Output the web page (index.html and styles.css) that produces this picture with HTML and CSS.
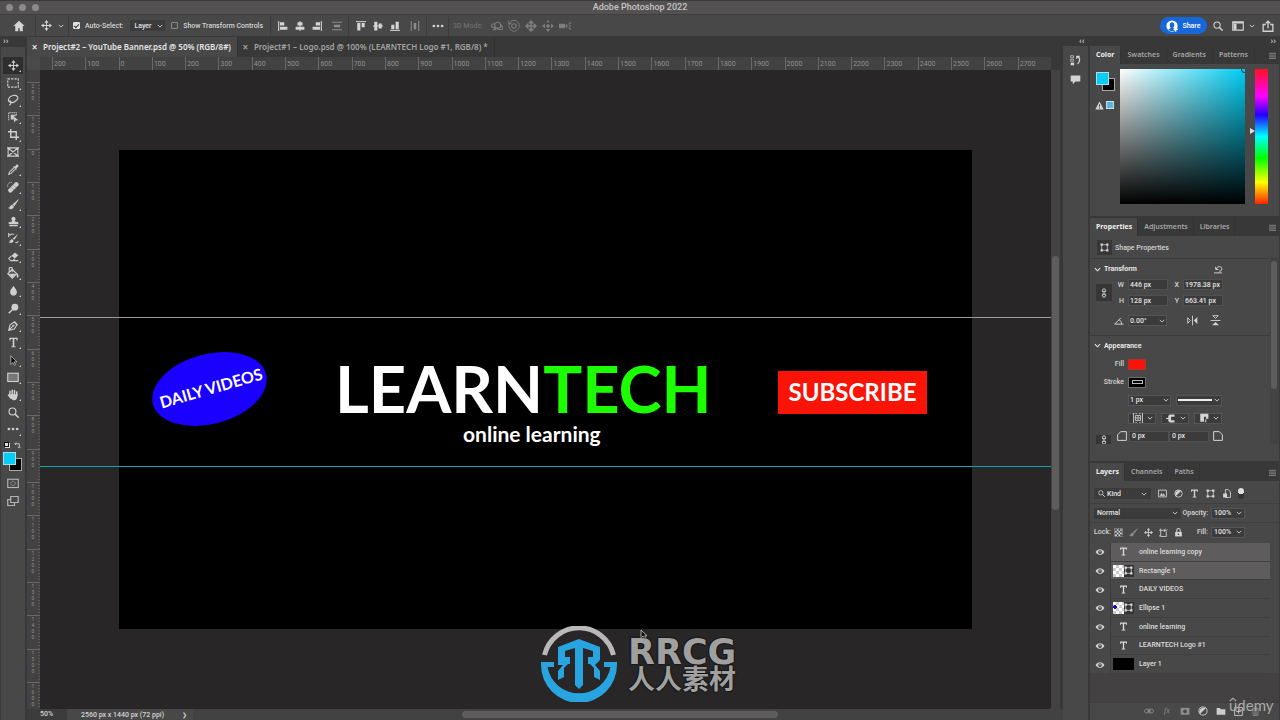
FILE: index.html
```html
<!DOCTYPE html>
<html lang="en">
<head>
<meta charset="utf-8">
<title>Adobe Photoshop 2022</title>
<link rel="stylesheet" href="styles.css">
</head>
<body>
<svg class="defs" aria-hidden="true">
  <symbol id="i-home" viewBox="0 0 16 16"><path d="M8 1 0.5 8H3v7h4v-4h2v4h4V8h2.500z" fill="currentColor"/></symbol>
  <symbol id="i-move" viewBox="0 0 16 16"><path d="M8 2v12M2 8h12" stroke="currentColor" stroke-width="1.500"/><path d="M8 0l3 4H5zM8 16l3-4H5zM0 8l4-3v6zM16 8l-4-3v6z" fill="currentColor"/></symbol>
  <symbol id="i-pan3" viewBox="0 0 16 16"><path d="M8 0l4 4-3 1v2h2l1-3 4 4-4 4-1-3H9v2l3 1-4 4-4-4 3-1V9H5l-1 3-4-4 4-4 1 3h2V5L4 4z" fill="currentColor"/></symbol>
  <symbol id="i-slide3" viewBox="0 0 16 16"><path d="M8 5l3 3-3 3-3-3zM8 0l2 3H6zM8 16l3-4H5zM0 8l4-3v6zM16 8l-4-3v6z" fill="currentColor"/></symbol>
  <symbol id="i-chev" viewBox="0 0 8 8"><path d="M1 2.500 4 5.500 7 2.500" fill="none" stroke="currentColor" stroke-width="1.200"/></symbol>
  <symbol id="i-marquee" viewBox="0 0 16 16"><rect x="1" y="2.500" width="14" height="11" fill="none" stroke="currentColor" stroke-width="1.500" stroke-dasharray="3 1.500"/></symbol>
  <symbol id="i-lasso" viewBox="0 0 16 16"><path d="M4 11C0 9 2 3 8 2s8 3 5 6-7 4-9 3c-2-1 0-3 1-1s1 3-2 5" fill="none" stroke="currentColor" stroke-width="1.500"/></symbol>
  <symbol id="i-select" viewBox="0 0 16 16"><path d="M1 12V1h11v4" fill="none" stroke="currentColor" stroke-width="1.500" stroke-dasharray="2 1"/><path d="M4 4h7v2H8v5H4zM8 6l7 6-4 .5-2 3z" fill="currentColor"/></symbol>
  <symbol id="i-crop" viewBox="0 0 16 16"><path d="M4 0v12h12M0 4h12v12" fill="none" stroke="currentColor" stroke-width="2"/></symbol>
  <symbol id="i-frame" viewBox="0 0 16 16"><path d="M1.500 2.500h13v11h-13zM2 3l12 10M14 3 2 13M0 2.500h16M0 13.500h16" fill="none" stroke="currentColor" stroke-width="1.400"/></symbol>
  <symbol id="i-dropper" viewBox="0 0 16 16"><path d="M9 5 2 12l-1 3 3-1 7-7" fill="none" stroke="currentColor" stroke-width="1.500"/><path d="M7.500 4 9 3l1 1 2-3c2-1 4 1 3 3l-3 2 1 1-1 1.500z" fill="currentColor"/></symbol>
  <symbol id="i-heal" viewBox="0 0 16 16"><path d="M6 15 15 6c2-2-2-6-4-4L2 11c-2 2 2 6 4 4z" fill="currentColor"/><path d="M5 8l4 4M8 5l4 4" stroke="#484848" stroke-dasharray="1 1"/><path d="M1 8C0 4 3 1 7 2" fill="none" stroke="currentColor" stroke-dasharray="2 1"/></symbol>
  <symbol id="i-brush" viewBox="0 0 16 16"><path d="M15 1 7 8l2 2zM6 9c-3 0-2 3-5 4 2 2 7 2 7-2z" fill="currentColor" stroke="currentColor"/></symbol>
  <symbol id="i-stamp" viewBox="0 0 16 16"><path d="M6 8C6 6 5 6 5 4c0-4 6-4 6 0 0 2-1 2-1 4l5 1v3H1V9zM2 13h12v2H2z" fill="currentColor"/></symbol>
  <symbol id="i-history" viewBox="0 0 16 16"><path d="M15 1 7 8l2 2zM6 9c-3 0-2 3-5 4 2 2 7 2 7-2z" fill="currentColor"/><path d="M1 6V1l2 2c2-2 4-2 6-1M11 13c1 2 3 1 4-1" fill="none" stroke="currentColor" stroke-width="1.500"/></symbol>
  <symbol id="i-eraser" viewBox="0 0 16 16"><path d="M10 2l5 4-5 5-5-4z" fill="currentColor"/><path d="M5 7l-4 4 3 3h3l3-3M7 14h8" fill="none" stroke="currentColor" stroke-width="1.500"/></symbol>
  <symbol id="i-bucket" viewBox="0 0 16 16"><path d="M7 3l6 6-6 6-6-6zM3 8V2c0-2 4-2 4 0v5" fill="none" stroke="currentColor" stroke-width="1.500"/><path d="M2 9h10l-5 5zM14 8c1 3 2 4 1 6-2 1-3-2-1-6z" fill="currentColor"/></symbol>
  <symbol id="i-blur" viewBox="0 0 16 16"><path d="M8 1c2 4 5 6 5 9 0 7-10 7-10 0 0-3 3-5 5-9z" fill="currentColor"/></symbol>
  <symbol id="i-dodge" viewBox="0 0 16 16"><circle cx="10" cy="6" r="5" fill="currentColor"/><path d="M7 9l-6 6" stroke="currentColor" stroke-width="2"/></symbol>
  <symbol id="i-pen" viewBox="0 0 16 16"><path d="M1 15 3 7l6-4 4 4-4 6zL7 9M9 2l5 5" fill="none" stroke="currentColor" stroke-width="1.600"/><circle cx="8" cy="8" r="1.500" fill="currentColor"/></symbol>
  <symbol id="i-type" viewBox="0 0 16 16"><path d="M2 1h12v4h-1.500L12 3H9.200v10.500l2 .3V15H4.800v-1.200l2-.3V3H4l-.5 2H2z" fill="currentColor"/></symbol>
  <symbol id="i-path" viewBox="0 0 16 16"><path d="M4 1v13l3-3 2 4 2-1-2-4h4z" fill="#111" stroke="currentColor"/></symbol>
  <symbol id="i-rect" viewBox="0 0 16 16"><rect x="1" y="3" width="14" height="11" fill="#777" stroke="currentColor" stroke-width="1.500"/></symbol>
  <symbol id="i-hand" viewBox="0 0 16 16"><path d="M4 8V3M7 8V1.500M10 8V2M13 9V4M2 8l3 4" stroke="currentColor" stroke-width="2" stroke-linecap="round"/><path d="M3 7h11c0 4-1 8-4 8-4 0-5-3-7-6z" fill="currentColor"/></symbol>
  <symbol id="i-search" viewBox="0 0 16 16"><circle cx="6.500" cy="6.500" r="5" fill="none" stroke="currentColor" stroke-width="1.700"/><path d="M10 10l5.500 5.500" stroke="currentColor" stroke-width="2.200"/></symbol>
  <symbol id="i-dots" viewBox="0 0 16 16"><g fill="currentColor"><circle cx="2.500" cy="8" r="1.800"/><circle cx="8" cy="8" r="1.800"/><circle cx="13.500" cy="8" r="1.800"/></g></symbol>
  <symbol id="i-mask" viewBox="0 0 16 16"><rect x="1" y="3" width="14" height="11" fill="none" stroke="currentColor" stroke-width="1.500"/><circle cx="8" cy="8.500" r="3" fill="none" stroke="currentColor" stroke-dasharray="1.500 .7"/></symbol>
  <symbol id="i-screen" viewBox="0 0 16 16"><path d="M5 10V2h10v8zM5 6H1v8h9v-4" fill="none" stroke="currentColor" stroke-width="1.600"/></symbol>
  <symbol id="i-al" viewBox="0 0 16 16"><path d="M1 0v16" stroke="currentColor" stroke-width="1.600"/><path d="M3 2h7v5H3zM3 9h12v5H3z" fill="currentColor"/></symbol>
  <symbol id="i-ac" viewBox="0 0 16 16"><path d="M8 0v16" stroke="currentColor" stroke-width="1.600"/><path d="M4 2h8v5H4zM1 9h14v5H1z" fill="currentColor"/></symbol>
  <symbol id="i-dist" viewBox="0 0 16 16"><path d="M0 2h16M0 14h16" stroke="currentColor" stroke-width="1.600"/><path d="M3 6h10v4H3z" fill="currentColor"/></symbol>
  <symbol id="i-orbit" viewBox="0 0 16 16"><circle cx="9" cy="7" r="4" fill="none" stroke="currentColor" stroke-width="1.400"/><path d="M5 5C0 5-1 9 3 10l9 3c4 0 5-3 1-6M2 13l4 0-2-4" fill="none" stroke="currentColor" stroke-width="1.400"/></symbol>
  <symbol id="i-roll" viewBox="0 0 16 16"><circle cx="8" cy="8" r="3" fill="none" stroke="currentColor" stroke-width="1.400"/><path d="M3 3C-1 8 3 15 8 15s9-6 6-11S5 0 3 3zM1 1v4h4" fill="none" stroke="currentColor" stroke-width="1.300"/></symbol>
  <symbol id="i-cam" viewBox="0 0 16 16"><path d="M0 5h8v6H0zM8 8l3-3v6z" fill="currentColor"/><path d="M16 3l-3 3M13 8h3M16 13l-3-3" stroke="currentColor" stroke-width="1.500"/></symbol>
  <symbol id="i-work" viewBox="0 0 16 16"><path d="M1 2.500h14v11H1zM1 4h14" fill="none" stroke="currentColor" stroke-width="1.500"/><path d="M2 5h4v8H2z" fill="currentColor"/></symbol>
  <symbol id="i-export" viewBox="0 0 16 16"><path d="M5 6H1.500v9h13V6H11M8 11V2M5 4.500 8 1.500l3 3" fill="none" stroke="currentColor" stroke-width="1.700"/></symbol>
  <symbol id="i-user" viewBox="0 0 16 16"><circle cx="8" cy="8" r="7.500" fill="#fff"/><path d="M8 3c-2 0-3 1.500-3 3.500S6 10 6.500 10.500L3 12.500c3 3 7 3 10 0l-3.500-2c.5-.5 1.500-2 1.500-4S10 3 8 3z" fill="#1767db"/><path d="M13 9.500v6M10 12.500h6" stroke="#fff" stroke-width="1.600"/></symbol>
  <symbol id="i-menu" viewBox="0 0 8 8"><path d="M0 1.500h8M0 3.500h8M0 5.500h8M0 7.500h8" stroke="currentColor"/></symbol>
  <symbol id="i-hist2" viewBox="0 0 16 16"><path d="M1 1h4v3H1zM1 6h4v3H1z" fill="none" stroke="currentColor"/><path d="M1 11h5v4H1z" fill="currentColor"/><path d="M9 2h5M9 5l3-3M11 3c4 0 4 7 0 10" fill="none" stroke="currentColor" stroke-width="1.800"/></symbol>
  <symbol id="i-chat" viewBox="0 0 16 16"><path d="M1 2h14v9H8l-4 4v-4H1z" fill="currentColor"/></symbol>
  <symbol id="i-warn" viewBox="0 0 16 16"><path d="M8 1l7.500 14H.5z" fill="currentColor"/><path d="M8 6v4M8 11.500v2" stroke="#333" stroke-width="1.600"/></symbol>
  <symbol id="i-shape" viewBox="0 0 16 16"><path d="M3 3h10v10H3z" fill="none" stroke="currentColor" stroke-width="1.300"/><path d="M1 1h4v4H1zM11 1h4v4h-4zM1 11h4v4H1zM11 11h4v4h-4z" fill="currentColor"/></symbol>
  <symbol id="i-link" viewBox="0 0 16 16"><path d="M5.500 6V3.500c0-3 5-3 5 0V6zM5.500 10v2.500c0 3 5 3 5 0V10zM8 5v6" fill="none" stroke="currentColor" stroke-width="1.500"/></symbol>
  <symbol id="i-reset" viewBox="0 0 16 16"><path d="M3 3v5h5M4 7c2-6 10-5 10 0 0 3-2 4-5 4M0 14h14" fill="none" stroke="currentColor" stroke-width="1.500"/></symbol>
  <symbol id="i-angle" viewBox="0 0 16 16"><path d="M15 13H1L11 3M8 6c3 1 4 4 4 7" fill="none" stroke="currentColor" stroke-width="1.500"/></symbol>
  <symbol id="i-flip" viewBox="0 0 16 16"><path d="M8 1v14M1 4v8l4-4z" fill="none" stroke="currentColor" stroke-width="1.300"/><path d="M15 3v10l-5-5z" fill="currentColor"/></symbol>
  <symbol id="i-sal" viewBox="0 0 16 16"><path d="M1 0v16M15 0v16M4 1h2M10 1h2M4 15h2M10 15h2" fill="none" stroke="currentColor" stroke-width="1.500"/><path d="M4 4h8v8H4z" fill="none" stroke="currentColor" stroke-width="1.300"/><circle cx="8" cy="8" r="2" fill="none" stroke="currentColor" stroke-width="1.500"/></symbol>
  <symbol id="i-cap" viewBox="0 0 16 16"><path d="M15 1H8C5 1 4 3 4 5v2H0v2h4v2c0 2 1 4 4 4h7v-4H9V5h6z" fill="currentColor"/></symbol>
  <symbol id="i-join" viewBox="0 0 16 16"><path d="M2 1h13v8h-4V6H8v8H2z" fill="currentColor"/><path d="M11 10v4H9" fill="none" stroke="currentColor" stroke-width="1.500"/></symbol>
  <symbol id="i-cor" viewBox="0 0 16 16"><path d="M1 15V6l5-5h9v14z" fill="none" stroke="currentColor" stroke-width="1.600"/></symbol>
  <symbol id="i-img" viewBox="0 0 16 16"><path d="M1 2h14v12H1z" fill="none" stroke="currentColor" stroke-width="1.500"/><path d="M3 12l3-5 2 3 2-2 3 4z" fill="currentColor"/></symbol>
  <symbol id="i-adj" viewBox="0 0 16 16"><circle cx="8" cy="8" r="6.500" fill="none" stroke="currentColor" stroke-width="1.500"/><path d="M3.500 12.500A6.500 6.500 0 0 1 12.500 3.500z" fill="currentColor"/></symbol>
  <symbol id="i-smart" viewBox="0 0 16 16"><path d="M6 1h5l4 4v10H6z" fill="none" stroke="currentColor" stroke-width="1.500"/><path d="M2 8h7v7H2z" fill="currentColor"/></symbol>
  <symbol id="i-check" viewBox="0 0 16 16"><path d="M1 1h14v14H1z" fill="none" stroke="currentColor" stroke-dasharray="2 1"/><path d="M5 2h3v3H5zM11 2h3v3h-3zM2 5h3v3H2zM8 5h3v3H8zM5 8h3v3H5zM11 8h3v3h-3zM2 11h3v3H2zM8 11h3v3H8z" fill="currentColor"/></symbol>
  <symbol id="i-artb" viewBox="0 0 16 16"><path d="M0 4h11M3 1v14h10V6M11 1l-2 5 6-3M0 14h3" fill="none" stroke="currentColor" stroke-width="1.500"/></symbol>
  <symbol id="i-lock" viewBox="0 0 16 16"><path d="M5 7V4c0-4 6-4 6 0v3" fill="none" stroke="currentColor" stroke-width="1.800"/><path d="M2 7h12v8H2z" fill="currentColor"/><circle cx="8" cy="11" r="1.400" fill="#444"/></symbol>
  <symbol id="i-eye" viewBox="0 0 16 16"><path d="M1 8c3-6 11-6 14 0-3 6-11 6-14 0z" fill="currentColor"/><circle cx="8" cy="8" r="3" fill="#3c3c3c"/><circle cx="8" cy="7.500" r="1.200" fill="currentColor"/></symbol>
  <symbol id="i-chain" viewBox="0 0 16 16"><path d="M7 5H4c-4 0-4 6 0 6h3zM9 5h3c4 0 4 6 0 6H9zM5 8h6" fill="none" stroke="currentColor" stroke-width="1.500"/></symbol>
  <symbol id="i-lmask" viewBox="0 0 16 16"><path d="M1 3h14v11H1z" fill="currentColor"/><circle cx="8" cy="8.500" r="3" fill="#484848"/></symbol>
  <symbol id="i-folder" viewBox="0 0 16 16"><path d="M1 3h5l2 2h7v9H1z" fill="currentColor"/></symbol>
  <symbol id="i-new" viewBox="0 0 16 16"><path d="M1 1h14v14H1zM8 4v8M4 8h8" fill="none" stroke="currentColor" stroke-width="1.500"/></symbol>
  <symbol id="i-trash" viewBox="0 0 16 16"><path d="M2 3h12M6 3V1h4v2M3 5h10l-1 10H4z" fill="none" stroke="currentColor" stroke-width="1.500"/><path d="M6 6v8M8 6v8M10 6v8" stroke="currentColor"/></symbol>
  <symbol id="i-swap" viewBox="0 0 16 16"><path d="M5 1 2 4l3 3M2 4h10v8M9 11l3 3 3-3" fill="none" stroke="currentColor" stroke-width="2"/></symbol>
</svg>

<header class="titlebar">
  <div class="lights"><i></i><i></i><i></i></div>
  <h1>Adobe Photoshop 2022</h1>
</header>

<div class="options">
  <div class="og og-home"><button aria-label="Home"><svg class="i12"><use href="#i-home"/></svg></button></div>
  <div class="og og-tool"><svg class="i11"><use href="#i-move"/></svg><svg class="i6"><use href="#i-chev"/></svg></div>
  <div class="og og-auto">
    <input type="checkbox" id="auto" checked><label for="auto">Auto-Select:</label>
    <div class="sel sel-layer"><select aria-label="Auto-select target"><option>Layer</option></select><svg class="i6"><use href="#i-chev"/></svg></div>
    <input type="checkbox" id="stc"><label for="stc">Show Transform Controls</label>
  </div>
  <div class="og og-align">
    <button aria-label="Align left"><svg class="i10"><use href="#i-al"/></svg></button>
    <button aria-label="Align centers"><svg class="i10"><use href="#i-ac"/></svg></button>
    <button aria-label="Align right"><svg class="i10 fx"><use href="#i-al"/></svg></button>
    <button aria-label="Distribute" class="dim wide"><svg class="i10"><use href="#i-dist"/></svg></button>
  </div>
  <div class="og og-align">
    <button aria-label="Align top"><svg class="i10 rot"><use href="#i-al"/></svg></button>
    <button aria-label="Align middles"><svg class="i10 rot"><use href="#i-ac"/></svg></button>
    <button aria-label="Align bottom"><svg class="i10 rotb"><use href="#i-al"/></svg></button>
    <button aria-label="Distribute vertically" class="dim wide"><svg class="i10 rot"><use href="#i-dist"/></svg></button>
  </div>
  <div class="og og-more"><button aria-label="More"><svg class="i12"><use href="#i-dots"/></svg></button></div>
  <div class="og og-3d"><span>3D Mode:</span>
    <svg class="i12"><use href="#i-orbit"/></svg><svg class="i12"><use href="#i-roll"/></svg><svg class="i12"><use href="#i-pan3"/></svg><svg class="i12"><use href="#i-slide3"/></svg><svg class="i12"><use href="#i-cam"/></svg>
  </div>
  <div class="right">
    <button class="share"><svg class="i12"><use href="#i-user"/></svg>Share</button>
    <button aria-label="Search"><svg class="i10"><use href="#i-search"/></svg></button>
    <button aria-label="Workspace" class="work"><svg class="i12"><use href="#i-work"/></svg><svg class="i6"><use href="#i-chev"/></svg></button>
    <button aria-label="Export"><svg class="i12"><use href="#i-export"/></svg></button>
  </div>
</div>

<div class="workspace">
  <nav class="tools">
    <div class="grip">››</div>
    <div class="toolgrid">
      <button class="on" aria-label="Move"><svg class="i11"><use href="#i-move"/></svg></button>
      <button aria-label="Marquee"><svg class="i12"><use href="#i-marquee"/></svg></button>
      <button aria-label="Lasso"><svg class="i12"><use href="#i-lasso"/></svg></button>
      <button aria-label="Object selection"><svg class="i11"><use href="#i-select"/></svg></button>
      <button aria-label="Crop"><svg class="i11"><use href="#i-crop"/></svg></button>
      <button class="solo" aria-label="Frame"><svg class="i12"><use href="#i-frame"/></svg></button>
      <button aria-label="Eyedropper"><svg class="i11"><use href="#i-dropper"/></svg></button>
      <button aria-label="Healing"><svg class="i12"><use href="#i-heal"/></svg></button>
      <button aria-label="Brush"><svg class="i11"><use href="#i-brush"/></svg></button>
      <button aria-label="Stamp"><svg class="i11"><use href="#i-stamp"/></svg></button>
      <button aria-label="History brush"><svg class="i11"><use href="#i-history"/></svg></button>
      <button aria-label="Eraser"><svg class="i11"><use href="#i-eraser"/></svg></button>
      <button aria-label="Paint bucket"><svg class="i12"><use href="#i-bucket"/></svg></button>
      <button aria-label="Blur"><svg class="i11"><use href="#i-blur"/></svg></button>
      <button aria-label="Dodge"><svg class="i11"><use href="#i-dodge"/></svg></button>
      <button aria-label="Pen"><svg class="i11"><use href="#i-pen"/></svg></button>
      <button aria-label="Type"><svg class="i11"><use href="#i-type"/></svg></button>
      <button aria-label="Path selection"><svg class="i11"><use href="#i-path"/></svg></button>
      <button aria-label="Rectangle"><svg class="i12"><use href="#i-rect"/></svg></button>
      <button aria-label="Hand"><svg class="i12"><use href="#i-hand"/></svg></button>
      <button class="solo" aria-label="Zoom"><svg class="i11"><use href="#i-search"/></svg></button>
      <button aria-label="Edit toolbar"><svg class="i12"><use href="#i-dots"/></svg></button>
    </div>
    <div class="swaprow"><span class="mini"></span><svg class="i7"><use href="#i-swap"/></svg></div>
    <div class="swatch"><b></b><i></i></div>
    <button class="tb" aria-label="Quick mask"><svg class="i12"><use href="#i-mask"/></svg></button>
    <button class="tb" aria-label="Screen mode"><svg class="i12"><use href="#i-screen"/></svg></button>
  </nav>

  <main class="doc">
    <div class="doctabs">
      <div class="dtab on"><button aria-label="Close">×</button><span>Project#2 – YouTube Banner.psd @ 50% (RGB/8#)</span></div>
      <div class="dtab"><button aria-label="Close">×</button><span>Project#1 – Logo.psd @ 100% (LEARNTECH Logo #1, RGB/8) *</span></div>
    </div>
    <div class="docgrid">
      <div class="corner"></div>
      <div class="hruler"><span>200</span><span>100</span><span>0</span><span>100</span><span>200</span><span>300</span><span>400</span><span>500</span><span>600</span><span>700</span><span>800</span><span>900</span><span>1000</span><span>1100</span><span>1200</span><span>1300</span><span>1400</span><span>1500</span><span>1600</span><span>1700</span><span>1800</span><span>1900</span><span>2000</span><span>2100</span><span>2200</span><span>2300</span><span>2400</span><span>2500</span><span>2600</span><span>2700</span></div>
      <div class="edge"></div>
      <div class="vruler"><span>200</span><span>100</span><span>0</span><span>100</span><span>200</span><span>300</span><span>400</span><span>500</span><span>600</span><span>700</span><span>800</span><span>900</span><span>1000</span><span>1100</span><span>1200</span><span>1300</span><span>1400</span><span>1500</span><span>1600</span></div>
      <div class="stage">
        <div class="artboard">
          <div class="ellipse"></div><div class="daily">DAILY VIDEOS</div>
          <div class="logo">LEARN<b>TECH</b></div>
          <div class="tagline">online learning</div>
          <div class="subscribe">SUBSCRIBE</div>
        </div>
        <div class="guide g1"></div><div class="guide g2"></div>
      </div>
      <div class="vscroll"><i></i></div>
    </div>
    <footer class="status">
      <span class="zoomv">50%</span><span class="dims">2560 px x 1440 px (72 ppi)</span><span class="more">❯</span><div class="hscroll"><i></i></div>
    </footer>
  </main>

  <aside class="side">
    <div class="grips"><span>‹‹</span><span>››</span></div>
    <div class="sidecols">
      <div class="dock">
        <button aria-label="History"><svg class="i11"><use href="#i-hist2"/></svg></button>
        <button aria-label="Comments"><svg class="i11"><use href="#i-chat"/></svg></button>
      </div>
      <div class="panels">
        <section class="panel color">
          <div class="tabs"><button class="on">Color</button><button>Swatches</button><button>Gradients</button><button>Patterns</button><svg class="i7"><use href="#i-menu"/></svg></div>
          <div class="colorbody">
            <div class="cleft"><div class="swatch sm"><b></b><i></i></div><div class="warn"><svg class="i9"><use href="#i-warn"/></svg><i></i></div></div>
            <div class="field2d"><i></i></div>
            <span class="arrow"></span>
            <div class="hue"></div>
          </div>
        </section>

        <section class="panel props">
          <div class="tabs"><button class="on">Properties</button><button>Adjustments</button><button>Libraries</button><svg class="i7"><use href="#i-menu"/></svg></div>
          <div class="ptitle"><span class="box"><svg class="i9"><use href="#i-shape"/></svg></span>Shape Properties</div>
          <div class="pscroll">
            <div class="pmain">
              <h2><svg class="i7"><use href="#i-chev"/></svg>Transform<svg class="i9 reset"><use href="#i-reset"/></svg></h2>
              <div class="xf">
                <button class="box link" aria-label="Link"><svg class="i10"><use href="#i-link"/></svg></button>
                <label for="w">W</label><input id="w" value="446 px"><label for="x">X</label><input id="x" value="1978.38 px">
                <label for="h">H</label><input id="h" value="128 px"><label for="y">Y</label><input id="y" value="663.41 px">
              </div>
              <div class="prow ang">
                <span class="lab"><svg class="i10"><use href="#i-angle"/></svg></span>
                <div class="sel s38"><input aria-label="Angle" value="0.00°"><svg class="i6"><use href="#i-chev"/></svg></div>
                <button aria-label="Flip horizontal" class="flip"><svg class="i11"><use href="#i-flip"/></svg></button>
                <button aria-label="Flip vertical"><svg class="i11 rot"><use href="#i-flip"/></svg></button>
              </div>
              <h2 class="ap"><svg class="i7"><use href="#i-chev"/></svg>Appearance</h2>
              <div class="prow"><span class="lab">Fill</span><button class="chip red" aria-label="Fill"></button></div>
              <div class="prow"><span class="lab">Stroke</span><button class="chip blk" aria-label="Stroke"><i></i></button></div>
              <div class="prow"><span class="lab"></span><div class="sel s41"><input aria-label="Stroke width" value="1 px"><svg class="i6"><use href="#i-chev"/></svg></div><button class="sel s46" aria-label="Stroke type"><i class="line"></i><svg class="i6"><use href="#i-chev"/></svg></button></div>
              <div class="prow"><span class="lab"></span><button class="sel s28" aria-label="Align"><svg class="i10"><use href="#i-sal"/></svg><svg class="i6"><use href="#i-chev"/></svg></button><button class="sel s28" aria-label="Caps"><svg class="i9"><use href="#i-cap"/></svg><svg class="i6"><use href="#i-chev"/></svg></button><button class="sel s28" aria-label="Corners"><svg class="i10"><use href="#i-join"/></svg><svg class="i6"><use href="#i-chev"/></svg></button></div>
              <div class="rad"><span class="box half"><svg class="i10"><use href="#i-link"/></svg></span><svg class="i10"><use href="#i-cor"/></svg><input aria-label="Radius left" value="0 px"><input aria-label="Radius right" value="0 px"><svg class="i10 fx"><use href="#i-cor"/></svg></div>
            </div>
            <div class="pbar"><i></i></div>
          </div>
        </section>

        <section class="panel layers">
          <div class="tabs"><button class="on">Layers</button><button>Channels</button><button>Paths</button><svg class="i7"><use href="#i-menu"/></svg></div>
          <div class="lrow filt">
            <div class="sel kind"><svg class="i7"><use href="#i-search"/></svg><select aria-label="Filter kind"><option>Kind</option></select><svg class="i6"><use href="#i-chev"/></svg></div>
            <svg class="i9"><use href="#i-img"/></svg><svg class="i9"><use href="#i-adj"/></svg><svg class="i9"><use href="#i-type"/></svg><svg class="i9"><use href="#i-shape"/></svg><svg class="i9"><use href="#i-smart"/></svg><span class="toggle"></span>
          </div>
          <div class="lrow">
            <div class="sel blend"><select aria-label="Blend mode"><option>Normal</option></select><svg class="i6"><use href="#i-chev"/></svg></div>
            <label for="op" class="oplab">Opacity:</label><div class="sel pct"><input id="op" value="100%"><svg class="i6"><use href="#i-chev"/></svg></div>
          </div>
          <div class="lrow locks"><span>Lock:</span><svg class="i9"><use href="#i-check"/></svg><svg class="i9 dim"><use href="#i-brush"/></svg><svg class="i9"><use href="#i-move"/></svg><svg class="i9"><use href="#i-artb"/></svg><svg class="i9"><use href="#i-lock"/></svg>
            <label for="fl" class="oplab">Fill:</label><div class="sel pct"><input id="fl" value="100%"><svg class="i6"><use href="#i-chev"/></svg></div>
          </div>
          <ul class="list">
            <li class="on"><svg class="i10"><use href="#i-eye"/></svg><div><svg class="i9 t"><use href="#i-type"/></svg>online learning copy</div></li>
            <li class="on"><svg class="i10"><use href="#i-eye"/></svg><div><span class="th"><i></i><svg class="i9"><use href="#i-shape"/></svg></span>Rectangle 1</div></li>
            <li><svg class="i10"><use href="#i-eye"/></svg><div><svg class="i9 t"><use href="#i-type"/></svg>DAILY VIDEOS</div></li>
            <li><svg class="i10"><use href="#i-eye"/></svg><div><span class="th el"><i></i><svg class="i9"><use href="#i-shape"/></svg></span>Ellipse 1</div></li>
            <li><svg class="i10"><use href="#i-eye"/></svg><div><svg class="i9 t"><use href="#i-type"/></svg>online learning</div></li>
            <li><svg class="i10"><use href="#i-eye"/></svg><div><svg class="i9 t"><use href="#i-type"/></svg>LEARNTECH Logo #1</div></li>
            <li><svg class="i10"><use href="#i-eye"/></svg><div><span class="th solid"></span>Layer 1</div></li>
          </ul>
          <div class="lfoot"><svg class="i10"><use href="#i-chain"/></svg><em>fx</em><svg class="i10"><use href="#i-lmask"/></svg><svg class="i10 lit"><use href="#i-adj"/></svg><svg class="i10 lit"><use href="#i-folder"/></svg><svg class="i9 lit"><use href="#i-new"/></svg><svg class="i9"><use href="#i-trash"/></svg></div>
        </section>
      </div>
    </div>
  </aside>
</div>

<svg class="cursor" viewBox="0 0 8 12"><path d="M1 1v8l2-2 1.500 3 1.500-.6L4.800 6.700H7z" fill="#111" stroke="#aaa"/></svg>
<div class="wm">
  <svg viewBox="0 0 76 76" class="wmlogo">
    <path d="M3.500 29A35.500 35.500 0 0 1 72.500 29" fill="none" stroke="#b9b9b9" stroke-width="5"/>
    <path d="M0 36h13v5H6.500a32 32 0 0 0 63 0H63v-5h13v3a38 38 0 0 1-76 0z" fill="#28a5e1"/>
    <path d="M38 13 59 21v13l-5 5 5 6v9l-6-3v-9l-4-4h-2V31h5v-6l-10-3v37l-4 4-4-4V22l-10 3v6h5v7h-2l-4 4v9l-6 3v-9l5-6h-5V21z" fill="#28a5e1"/>
  </svg>
  <div class="wmtext"><strong>RRCG</strong><span lang="zh">人人素材</span></div>
</div>
<div class="udemy"><svg viewBox="0 0 10 5"><path d="M1 4.500 5 1l4 3.500" fill="none" stroke="currentColor" stroke-width="1.500"/></svg>udemy</div>
</body>
</html>
```
FILE: styles.css
```css
* { box-sizing: border-box; }
html, body { height: 100%; }
body { margin: 0; display: flex; flex-direction: column; overflow: hidden; position: relative; background: #484848; color: #d4d4d4; font: 500 7px/10px Roboto, Inter, sans-serif; }
button, input, select { font: inherit; color: inherit; background: none; border: 0; padding: 0; margin: 0; border-radius: 0; appearance: none; min-width: 0; outline: 0; }
button { display: flex; align-items: center; justify-content: center; }
svg { flex: none; display: block; }
ul, h1, h2 { margin: 0; padding: 0; list-style: none; font-size: inherit; }
.defs { position: absolute; width: 0; height: 0; }
.i6 { width: 6px; height: 6px; }
.i7 { width: 7px; height: 7px; }
.i9 { width: 9px; height: 9px; }
.i10 { width: 10px; height: 10px; }
.i11 { width: 11px; height: 11px; }
.i12 { width: 12px; height: 12px; }
.fx { transform: scaleX(-1); }
.rot { transform: rotate(90deg); }
.rotb { transform: rotate(-90deg); }

.titlebar { flex: 0 0 15px; display: grid; grid-template-columns: 1fr auto 1fr; align-items: center; background: #545152; border-top: 1px solid #3a3839; border-bottom: 1px solid #3f3f3f; }
.titlebar h1 { font: 500 9px/13px Roboto, sans-serif; color: #c6c4c5; }
.lights { display: flex; gap: 6px; padding-left: 6px; }
.lights i { width: 7px; height: 7px; border-radius: 50%; background: #8d898b; }

.options { flex: 0 0 22px; display: flex; align-items: center; border-bottom: 1px solid #3a3a3a; }
.og { display: flex; align-items: center; height: 20px; border-right: 1px solid #3c3c3c; white-space: nowrap; }
.og-home { width: 36px; padding-left: 13px; }
.og-tool { width: 33px; padding-left: 5px; gap: 6px; }
.og-auto { width: 202px; padding-left: 4px; }
.og-auto label { margin: 0 7px 0 5px; }
.og-align { width: 78px; padding-left: 7px; gap: 7px; }
.og-align .wide { margin-left: 3px; }
.dim { color: #8c8c8c; }
.og-more { width: 22px; justify-content: center; }
.og-3d { border: 0; color: #7d7d7d; gap: 5px; padding-left: 4px; }
.og-3d span { color: #6c6c6c; width: 33px; }
input[type=checkbox] { width: 7px; height: 7px; border: 1px solid #8a8a8a; border-radius: 1px; }
input[type=checkbox]:checked { background: #e2e2e2; display: grid; place-items: center; border-color: #e2e2e2; }
input[type=checkbox]:checked::after { content: ""; width: 2px; height: 4px; border: solid #333; border-width: 0 1px 1px 0; transform: rotate(45deg); }
.sel { display: flex; align-items: center; background: #3b3b3b; border: 1px solid #555; height: 11px; padding: 0 3px; }
.sel select, .sel input { flex: 1; width: 100%; color: #e2e2e2; }
.sel-layer { width: 35px; margin-right: 6px; padding: 0 1px 0 3px; border-color: #3b3b3b; }
.right { margin-left: auto; display: flex; align-items: center; gap: 9px; padding-right: 6px; }
.share { background: #1767db; color: #fff; border-radius: 9px; height: 17px; width: 47px; gap: 4px; margin-right: -3px; }
.work { gap: 5px; margin-right: -2px; }

.workspace { flex: 1; display: flex; min-height: 0; }
.tools { flex: 0 0 27px; background: #484848; border-right: 2px solid #383838; border-left: 1px solid #3a3a3a; display: flex; flex-direction: column; }
.grip { height: 10px; background: #383838; padding-left: 2px; line-height: 8px; font-size: 9px; }
.toolgrid { display: grid; grid-auto-rows: 1fr; height: 381px; margin-top: 10px; padding: 0 2px; }
.toolgrid button { position: relative; color: #cfcfcf; }
.toolgrid button.on { background: #2e2e2e; }
.toolgrid button::after { content: ""; position: absolute; right: 2px; bottom: 2px; border: 1px solid; border-color: transparent #ccc #ccc transparent; }
.toolgrid button.solo::after { display: none; }
.swaprow { display: flex; justify-content: space-between; padding: 4px 4px 0 3px; }
.mini { width: 5px; height: 5px; background: #ddd; border: 1px solid #111; box-shadow: 1px 1px 0 #ddd; }
.swatch { display: grid; grid-template: 6px 7px 6px / 6px 7px 6px; margin: 3px 0 3px 2px; }
.swatch b { grid-area: 1 / 1 / 3 / 3; background: #05cdf5; border: 1px solid #a9dce9; z-index: 1; }
.swatch i { grid-area: 2 / 2 / 4 / 4; background: #000; border: 1px solid #aaa; }
.tb { height: 18px; color: #b5b5b5; }

.doc { flex: 1; min-width: 0; display: flex; flex-direction: column; background: #383838; }
.doctabs { flex: 0 0 20px; display: flex; font: 600 8px/20px "Noto Sans", sans-serif; color: #a3a3a3; white-space: nowrap; overflow: hidden; }
.dtab { display: flex; align-items: center; gap: 6px; padding: 0 6px 0 5px; border-right: 1px solid #303030; }
.dtab button { font-size: 10px; width: 5px; }
.dtab.on { background: #484848; color: #e6e6e6; }
.docgrid { flex: 1; min-height: 0; display: grid; grid-template: 13px minmax(0, 1fr) / 13px minmax(0, 1fr) 12px; }
.corner { background: #4a4a4a; }
.edge { background: #383838; }
.hruler { display: grid; grid-template-columns: repeat(30, minmax(0, 1fr)); padding-left: 12px; background: #424242; color: #8f8f8f; font-weight: 400; line-height: 15px; overflow: hidden; }
.hruler span { border-left: 1px solid #686868; padding-left: 1px; background: repeating-linear-gradient(90deg, transparent 0 2px, #5a5a5a 2px 3px) bottom / 100% 2px no-repeat; }
.vruler { display: grid; grid-template-rows: repeat(18, minmax(0, 1fr)) 27px; padding-top: 12px; background: #424242; color: #8f8f8f; font-weight: 400; font-size: 5px; overflow: hidden; }
.vruler span { border-top: 1px solid #686868; writing-mode: vertical-lr; text-orientation: upright; line-height: 12px; background: repeating-linear-gradient(transparent 0 2px, #5a5a5a 2px 3px) right / 2px 100% no-repeat; }
.stage { position: relative; background: #282626; overflow: hidden; }
.artboard { position: absolute; left: 79px; top: 80px; width: 853px; height: 479px; background: #000; font-family: Lato, sans-serif; font-weight: 700; color: #fff; white-space: nowrap; }
.artboard > * { position: absolute; }
.ellipse { left: 32px; top: 204px; width: 117px; height: 70px; border-radius: 50%; background: #1a00ff; transform: rotate(-15deg); }
.daily { left: 39px; top: 226px; font-size: 16px; line-height: 24px; transform: rotate(-16deg); }
.logo { left: 216px; top: 198px; font-size: 65px; line-height: 80px; }
.logo b { color: #1cff00; font-weight: inherit; }
.tagline { left: 344px; top: 270px; font-size: 21px; line-height: 28px; }
.subscribe { left: 659px; top: 221px; width: 149px; height: 43px; line-height: 42px; text-align: center; font-size: 24px; background: #fa1307; }
.guide { position: absolute; left: 0; right: 0; height: 1px; }
.g1 { top: 247px; background: #9a9a9a; }
.g2 { top: 396px; background: #12a5b2; }
.vscroll { background: #424242; border-right: 3px solid #383838; padding: 186px 1px 0; }
.vscroll i { display: block; height: 254px; border-radius: 4px; background: #5f5c5e; }
.status { flex: 0 0 11px; display: flex; align-items: center; background: #484848; white-space: nowrap; }
.zoomv { width: 40px; padding-left: 13px; height: 11px; background: #3c3c3c; }
.dims { padding-left: 14px; width: 113px; }
.more { font-size: 6px; padding: 0 6px 0 2px; }
.hscroll { flex: 1; display: flex; background: #424242; height: 11px; align-items: center; padding-left: 26%; }
.hscroll i { width: 316px; height: 7px; border-radius: 4px; background: #5f5c5e; }

.side { flex: 0 0 217px; display: flex; flex-direction: column; background: #383838; }
.grips { display: flex; justify-content: space-between; height: 9px; padding: 0 4px 0 16px; line-height: 8px; font-size: 9px; }
.sidecols { flex: 1; display: flex; gap: 2px; min-height: 0; }
.dock { flex: 0 0 25px; background: #484848; display: flex; flex-direction: column; align-items: center; gap: 8px; padding-top: 9px; }
.panels { flex: 1; min-width: 0; display: flex; flex-direction: column; gap: 2px; }
.panel { background: #484848; border-right: 1px solid #3a3a3a; display: flex; flex-direction: column; }
.tabs { flex: 0 0 18px; display: flex; background: #383838; font: 600 7px/18px "Noto Sans", sans-serif; color: #a6a6a6; align-items: center; }
.tabs button { height: 18px; padding: 0 5px 0 6px; border-right: 1px solid #333; }
.tabs .on { background: #484848; color: #f0f0f0; font-weight: 700; }
.tabs svg { margin-left: auto; margin-right: 3px; color: #8a8a8a; }
.color { flex: 0 0 170px; }
.color .tabs button { padding-right: 6px; }
.colorbody { display: flex; padding-top: 5px; height: 140px; }
.cleft { width: 30px; }
.swatch.sm { margin: 3px 0 10px 6px; }
.warn { display: flex; gap: 2px; padding-left: 5px; }
.warn i { width: 8px; height: 8px; background: #55b7dc; border: 1px solid #cde; }
.field2d { flex: 1; background: linear-gradient(transparent, #000), linear-gradient(90deg, #fff, #00cdf2); overflow: hidden; position: relative; }
.field2d i { position: absolute; right: -3px; top: -3px; width: 7px; height: 7px; border: 1px solid #124; border-radius: 50%; }
.arrow { width: 5px; margin: 59px 0 0 5px; height: 6px; background: #e0e0e0; clip-path: polygon(0 0, 100% 50%, 0 100%); }
.hue { width: 13px; margin-right: 11px; background: linear-gradient(#f12, #f0f 20%, #20f 34%, #0ff 50%, #0f0 66%, #ff0 84%, #f20); }

.props { flex: 0 0 243px; }
.ptitle { flex: 0 0 23px; display: flex; align-items: center; gap: 3px; padding: 1px 0 0 7px; border-bottom: 1px solid #3c3c3c; }
.box { display: flex; align-items: center; justify-content: center; background: #363636; width: 15px; height: 15px; }
.pscroll { display: flex; height: 185px; overflow: hidden; }
.pmain { flex: 1; min-width: 0; }
.pmain h2 { display: flex; align-items: center; gap: 3px; height: 20px; padding-left: 4px; font-weight: 700; color: #e6e6e6; }
.pmain .reset { margin-left: auto; margin-right: 47px; }
.pbar { width: 9px; padding: 2px 2px 0 1px; background: #434343; }
.pbar i { display: block; height: 128px; border-radius: 3px; background: #5f5c5e; }
.xf { display: grid; grid-template-columns: 16px 16px 40px 15px 40px; grid-auto-rows: 11px; row-gap: 5px; padding-left: 6px; align-items: center; }
.xf label { text-align: right; padding-right: 4px; }
.link { grid-row: 1 / 3; height: 17px; width: 16px; }
.xf input, .rad input { background: #3b3b3b; border: 1px solid #505050; height: 11px; padding-left: 1px; color: #e2e2e2; width: 100%; }
.prow { display: flex; align-items: center; height: 18px; }
.prow > .sel { margin-right: 5px; }
.lab { width: 34px; margin-right: 4px; display: flex; justify-content: flex-end; }
.ang { height: 29px; }
.s38 { width: 39px; padding: 0 1px; }
.flip { margin: 0 12px 0 15px; }
.ap { border-top: 1px solid #3c3c3c; }
.chip { width: 18px; height: 11px; border: 1px solid #6d6d6d; }
.red { background: #fa1307; border-color: #a33; }
.blk { background: #000; }
.blk i { width: 11px; height: 4px; border: 1px solid #bbb; }
.s41 { width: 43px; padding: 0 1px; }
.s46 { width: 46px; justify-content: space-between; padding: 0 1px; }
.line { width: 34px; height: 2px; background: #eee; }
.prow .s28 { width: 28px; justify-content: space-between; padding: 0 2px 0 4px; margin-right: 5px; }
.rad { display: flex; align-items: center; padding-left: 6px; height: 18px; }
.rad .half { height: 10px; margin: 8px 6px 0 0; align-self: flex-start; }
.rad input { width: 40px; padding-left: 2px; }
.rad svg + input { margin-left: 2px; }
.rad input + svg { margin-left: 4px; }

.layers { flex: 1; min-height: 0; background: linear-gradient(#484848 210px, #444143 210px calc(100% - 17px), #484848 calc(100% - 17px)); }
.lrow { flex: 0 0 19px; display: flex; align-items: center; padding: 0 4px; border-bottom: 1px solid #3f3f3f; }
.filt { gap: 7px; flex-basis: 23px; padding-top: 3px; }
.kind { width: 57px; gap: 2px; border-color: #3b3b3b; }
.toggle { width: 6px; height: 11px; border-radius: 3px; background: radial-gradient(circle at 3px 3px, #ddd 3px, #333 3px); }
.blend { width: 87px; border-color: #3b3b3b; padding: 0 2px; }
.oplab { margin: 0 3px 0 auto; }
.pct { width: 34px; padding: 0 2px; margin-right: 30px; }
.locks { gap: 6px; border: 0; flex-basis: 20px; padding-bottom: 2px; }
.locks span { width: 14px; white-space: nowrap; }
.locks .oplab { margin-right: -3px; }
.list { display: grid; grid-auto-rows: 1fr; height: 131px; margin-right: 9px; }
.list li { display: grid; grid-template-columns: 20px 1fr; align-items: center; justify-items: center; }
.list li > div { justify-self: stretch; height: 100%; display: flex; align-items: center; border: solid #3e3e3e; border-width: 0 0 1px 1px; color: #dcdcdc; }
.list .on > div { background: #5f5c5e; }
.list .t { margin: 0 11px 0 8px; }
.th { display: flex; align-items: center; width: 21px; height: 12px; margin: 0 5px 0 2px; background: #333; }
.th i { width: 11px; height: 12px; background: repeating-conic-gradient(#ccc 0 25%, #fff 0 50%) 0 0 / 6px 6px; }
.el i { background: radial-gradient(circle at 2px 5px, #20c 2px, transparent 2px), repeating-conic-gradient(#ccc 0 25%, #fff 0 50%) 0 0 / 6px 6px; }
.th.solid { background: #000; }
.lfoot { margin-top: auto; flex: 0 0 18px; border-top: 1px solid #3f3f3f; display: flex; align-items: center; gap: 8px; padding: 0 0 1px 54px; color: #8d8d8d; }
.lfoot em { font: italic 8px/10px "Liberation Serif", serif; width: 10px; text-align: center; }
.lfoot .lit { color: #ccc; }

.cursor { position: absolute; left: 640px; top: 629px; width: 8px; height: 12px; }
.wm { position: absolute; left: 541px; top: 626px; display: flex; gap: 11px; }
.wmlogo { width: 76px; height: 76px; }
.wmtext { display: flex; flex-direction: column; color: #a0a0a0; text-shadow: 0 0 1px #000, 0 0 2px #000; padding-top: 11px; }
.wmtext strong { font: 700 35px/30px "DejaVu Sans", sans-serif; }
.wmtext span { font: 700 27px/22px "Noto Sans CJK SC", sans-serif; }
.udemy { position: absolute; left: 1229px; top: 695px; font: 400 15px/20px Lato, sans-serif; color: #aaa; }
.udemy svg { position: absolute; left: 0; top: 2px; width: 8px; height: 5px; }
```
